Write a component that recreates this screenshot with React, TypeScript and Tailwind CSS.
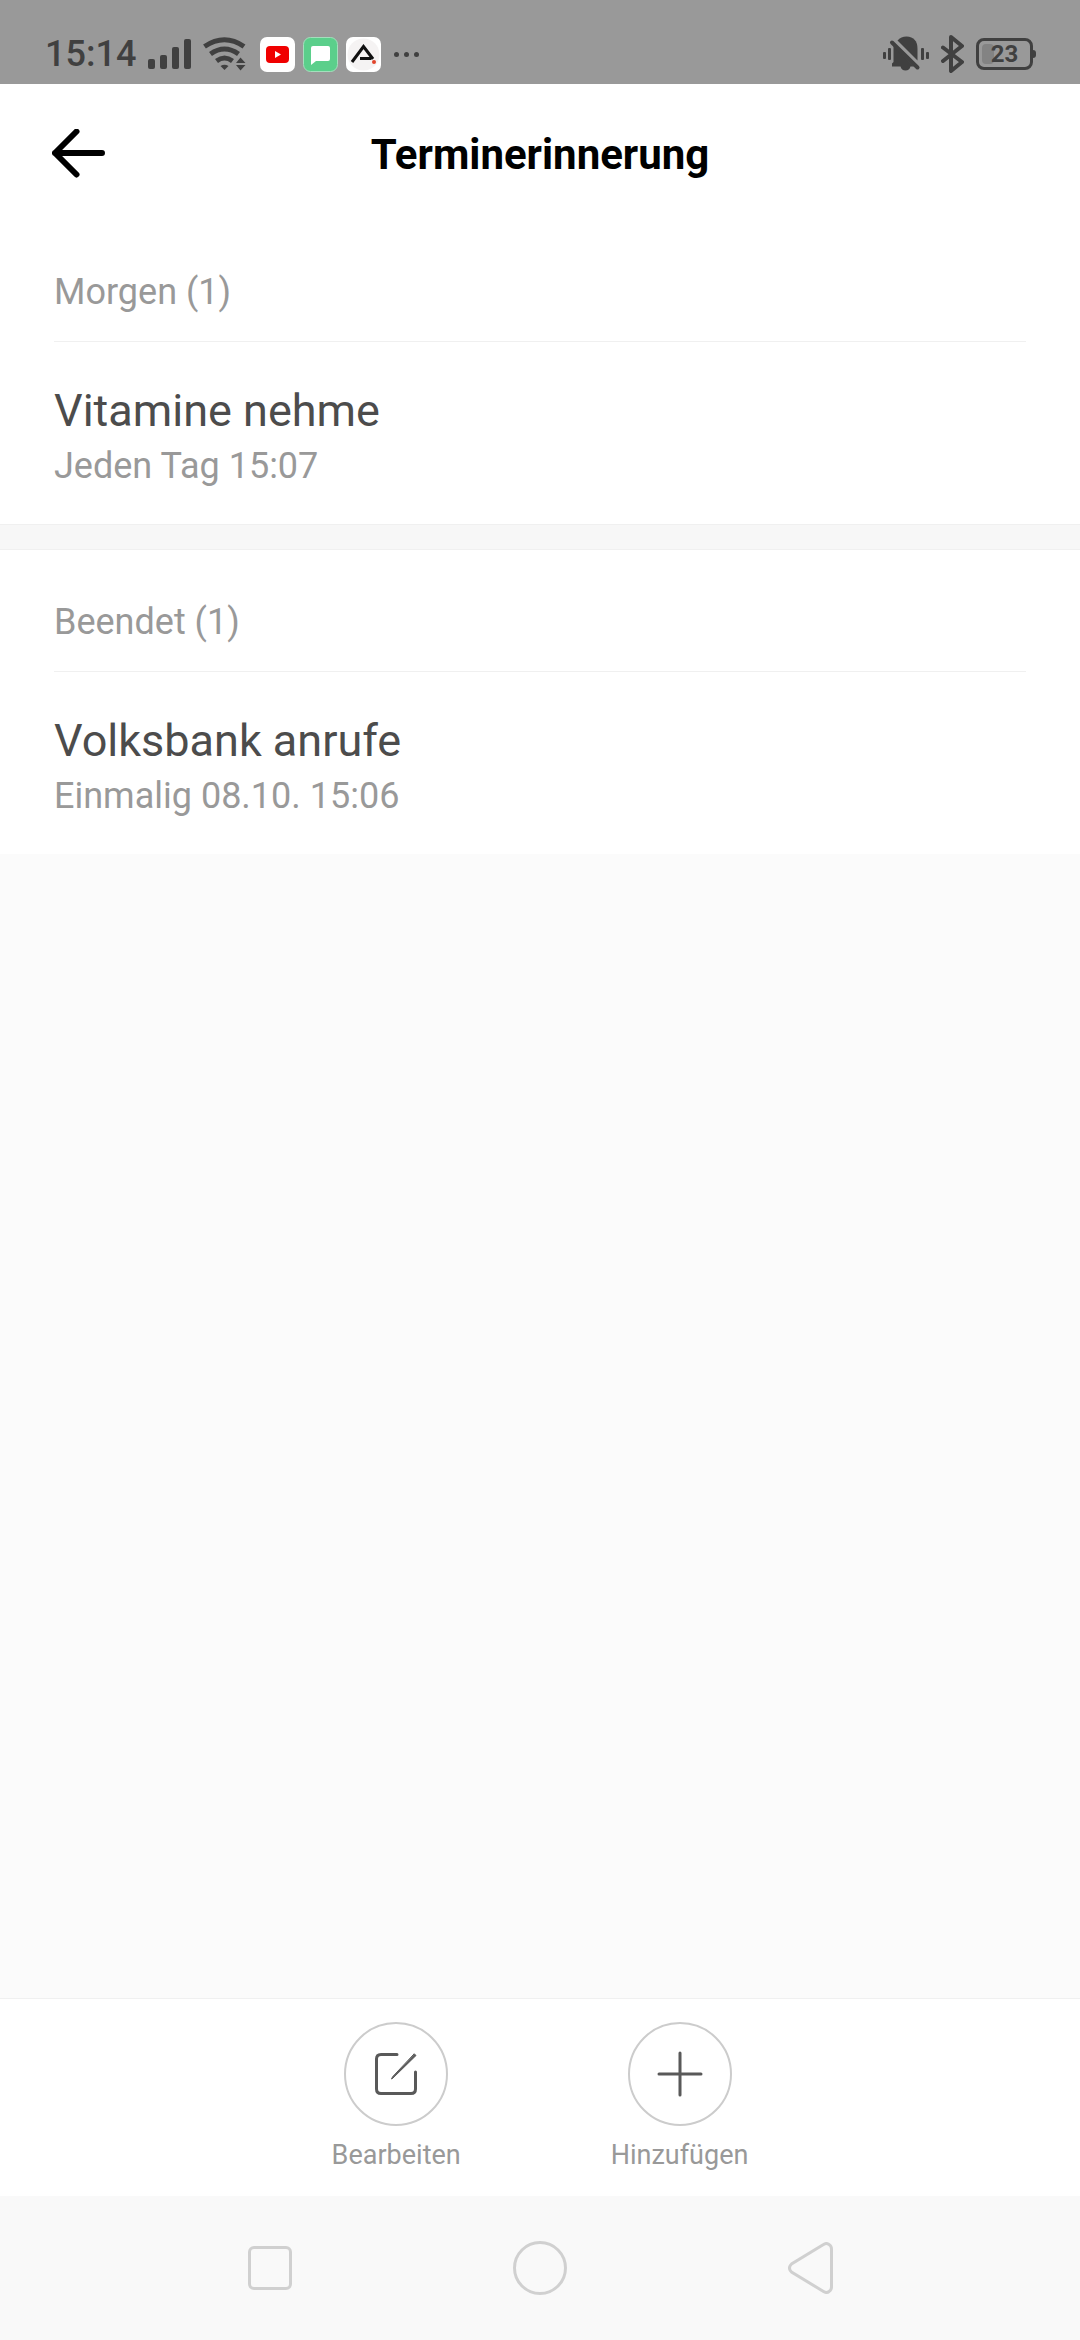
import React from 'react';

const groups = [
  {
    title: 'Morgen (1)',
    items: [{ name: 'Vitamine nehme', time: 'Jeden Tag 15:07' }],
  },
  {
    title: 'Beendet (1)',
    items: [{ name: 'Volksbank anrufe', time: 'Einmalig 08.10. 15:06' }],
  },
];

function SignalIcon() {
  return (
    <svg width="43" height="30" viewBox="0 0 43 30" fill="currentColor">
      <rect x="0" y="20" width="7" height="10" rx="2" />
      <rect x="12" y="16" width="7" height="14" rx="2" />
      <rect x="24" y="8" width="7" height="22" rx="2" />
      <rect x="36" y="0" width="7" height="30" rx="2" />
    </svg>
  );
}

function WifiIcon() {
  return (
    <svg width="43" height="34" viewBox="0 0 43 34" fill="none" stroke="currentColor" strokeWidth="5">
      <path d="M1.5 9.5Q21.5 -4 41 9.5" />
      <path d="M7.5 17Q21.5 7 35.5 17" />
      <path d="M13.5 24Q21.5 18 29.5 24" />
      <path d="M17.5 29Q21.5 26.5 25.5 29L21.5 33Z" fill="currentColor" stroke="none" />
      <path d="M37.5 20.5L42.5 26H33ZM37.5 33.5L42.5 28H33Z" fill="currentColor" stroke="none" />
    </svg>
  );
}

function VideoAppIcon() {
  return (
    <svg width="35" height="35" viewBox="0 0 35 35">
      <rect width="35" height="35" rx="7" fill="#fff" />
      <rect x="6" y="9" width="23" height="17" rx="4" fill="#f00000" />
      <path d="M15 14V21L21 17.5Z" fill="#fff" />
    </svg>
  );
}

function MessageAppIcon() {
  return (
    <svg width="35" height="35" viewBox="0 0 35 35">
      <rect x="0.5" y="0.5" width="34" height="34" rx="7" fill="#5bcf8b" stroke="#a4dfbd" />
      <path d="M10 9H25Q27 9 27 11V22Q27 24 25 24H13L8 28V11Q8 9 10 9Z" fill="#fff" />
    </svg>
  );
}

function TriangleAppIcon() {
  return (
    <svg width="35" height="35" viewBox="0 0 35 35" fill="none">
      <rect width="35" height="35" rx="7" fill="#fff" />
      <circle cx="17.5" cy="17.5" r="16" fill="#f5f3f3" />
      <path d="M6 25L17.5 9.5L27 22" stroke="#111" strokeWidth="3" />
      <path d="M14 21.5H25" stroke="#111" strokeWidth="3" />
      <circle cx="28" cy="25" r="2" fill="#e2452c" />
    </svg>
  );
}

function MutedBellIcon() {
  return (
    <svg width="46" height="36" viewBox="0 0 46 36" fill="currentColor">
      <path d="M14.5 4.5Q18 0.5 23.5 0.5Q34.5 1 34.5 13V24.5Z" />
      <path d="M10.5 9.5L31 30.5H27.5Q26.500 34.5 22.5 34.5Q18.5 34.5 17.5 30.5H9V27.5L10.5 26Z" />
      <path d="M9 6.5L34.5 31.5" stroke="currentColor" strokeWidth="4" strokeLinecap="round" />
      <rect x="0" y="16" width="3" height="7" rx="1" />
      <rect x="5" y="12" width="3" height="12" rx="1" />
      <rect x="38" y="12" width="3" height="12" rx="1" />
      <rect x="43" y="16" width="3" height="7" rx="1" />
    </svg>
  );
}

function BluetoothIcon() {
  return (
    <svg width="23" height="38" viewBox="0 0 23 38" fill="none" stroke="currentColor" strokeWidth="4" strokeLinecap="round" strokeLinejoin="round">
      <path d="M2 12.5L21 27L10 36V2L21 11L2 26" />
    </svg>
  );
}

function Battery() {
  return (
    <div className="flex items-center">
      <div className="relative flex h-8 w-[57px] items-center justify-center rounded-lg border-3 border-current">
        <div className="absolute top-[3px] left-[3px] h-5 w-3 rounded bg-[#838383]" />
        <span className="relative text-2xl leading-6 font-bold">23</span>
      </div>
      <div className="h-2 w-[3px] rounded-r bg-current" />
    </div>
  );
}

function StatusBar() {
  return (
    <div className="flex h-[84px] items-center justify-between bg-[#999] pt-6 pr-11 pl-[45px] text-[#404040]">
      <div className="flex items-center">
        <span className="mr-3 text-4xl leading-9 font-medium">15:14</span>
        <SignalIcon />
        <div className="mr-[14px] ml-3">
          <WifiIcon />
        </div>
        <div className="flex gap-2">
          <VideoAppIcon />
          <MessageAppIcon />
          <TriangleAppIcon />
        </div>
        <div className="ml-[13px] flex gap-[5px]">
          <span className="h-[5px] w-[5px] rounded-full bg-current" />
          <span className="h-[5px] w-[5px] rounded-full bg-current" />
          <span className="h-[5px] w-[5px] rounded-full bg-current" />
        </div>
      </div>
      <div className="flex items-center gap-3">
        <MutedBellIcon />
        <BluetoothIcon />
        <Battery />
      </div>
    </div>
  );
}

function Header() {
  return (
    <header className="grid h-[136px] grid-cols-[1fr_auto_1fr] items-center bg-white px-[52px] pt-1">
      <button type="button" aria-label="Zurück" className="justify-self-start text-black">
        <svg width="53" height="50" viewBox="0 0 53 50" fill="none" stroke="currentColor" strokeWidth="6" strokeLinecap="round" strokeLinejoin="round">
          <path d="M50 24H3M24.5 2.500L3 24L24.5 45.500" />
        </svg>
      </button>
      <h1 className="pt-0.5 text-[42px] leading-[56px] font-bold text-black">Terminerinnerung</h1>
    </header>
  );
}

function ReminderGroup({ title, items }: (typeof groups)[number]) {
  return (
    <section className="bg-white px-[54px] pt-12">
      <h2 className="border-b border-[#f0f0f0] pb-[25px] text-4xl leading-[48px] text-[#999]">{title}</h2>
      <ul>
        {items.map((item) => (
          <li key={item.name} className="pt-10 pb-[34px]">
            <p className="pb-0.5 text-[45px] leading-[58px] text-[#4c4c4c]">{item.name}</p>
            <p className="text-4xl leading-[48px] text-[#999]">{item.time}</p>
          </li>
        ))}
      </ul>
    </section>
  );
}

function ActionButton({ label, children }: { label: string; children: React.ReactNode }) {
  return (
    <button type="button" className="flex flex-col items-center gap-3">
      <span className="flex h-[104px] w-[104px] items-center justify-center rounded-full border-2 border-[#ccc] text-[#595959]">
        {children}
      </span>
      <span className="text-[27px] leading-[34px] text-[#999]">{label}</span>
    </button>
  );
}

function ActionBar() {
  return (
    <div className="flex h-[198px] items-start justify-center gap-[150px] border-t border-[#f0f0f0] bg-white pt-[23px]">
      <ActionButton label="Bearbeiten">
        <svg width="44" height="44" viewBox="0 0 44 44" fill="none" stroke="currentColor" strokeWidth="3" strokeLinecap="round">
          <path d="M23 2.5H7Q2.5 2.5 2.5 7V37Q2.5 41.5 7 41.5H37Q41.5 41.5 41.5 37V20" />
          <path d="M40.5 2L42 3.5L19 26L17.5 27L18.5 25Z" fill="currentColor" strokeWidth="1" strokeLinejoin="round" />
        </svg>
      </ActionButton>
      <ActionButton label="Hinzufügen">
        <svg width="46" height="46" viewBox="0 0 46 46" fill="none" stroke="currentColor" strokeWidth="3" strokeLinecap="round">
          <path d="M23 2V44M2 23H44" />
        </svg>
      </ActionButton>
    </div>
  );
}

function NavBar() {
  return (
    <nav className="grid h-36 grid-cols-3 place-items-center bg-[#f9f9f9] px-[12.5%] text-[#d0d0d0]">
      <button type="button" aria-label="Letzte Apps">
        <svg width="44" height="44" viewBox="0 0 44 44" fill="none" stroke="currentColor" strokeWidth="3">
          <rect x="1.5" y="1.5" width="41" height="41" rx="4.5" />
        </svg>
      </button>
      <button type="button" aria-label="Startseite">
        <svg width="54" height="54" viewBox="0 0 54 54" fill="none" stroke="currentColor" strokeWidth="3">
          <circle cx="27" cy="27" r="25.5" />
        </svg>
      </button>
      <button type="button" aria-label="Zurück">
        <svg width="45" height="52" viewBox="0 0 45 52" fill="none" stroke="currentColor" strokeWidth="3">
          <path d="M35.5 2.5Q38.5 0.5 41 2.5Q43.5 4 43.5 7V45Q43.5 48 41 49.5Q38.5 51.5 35.5 49.5L3.5 30Q-0.5 26 3.5 22Z" />
        </svg>
      </button>
    </nav>
  );
}

export default function App() {
  return (
    <div className="flex min-h-screen flex-col bg-[#fbfbfb] font-[Roboto,sans-serif]">
      <StatusBar />
      <Header />
      <main className="flex-1">
        <ReminderGroup {...groups[0]} />
        <div className="h-[26px] border-y border-[#f0f0f0] bg-[#f7f7f7]" />
        <ReminderGroup {...groups[1]} />
      </main>
      <ActionBar />
      <NavBar />
    </div>
  );
}
